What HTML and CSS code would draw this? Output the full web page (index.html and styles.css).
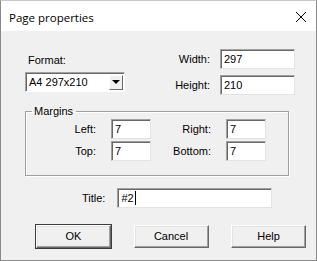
FILE: index.html
```html
<!DOCTYPE html>
<html>

<head>
  <meta charset="utf-8" />
  <title>Page properties</title>
  <link rel="stylesheet" href="styles.css">
</head>

<body>
  <div class="window">
    <div class="titlebar">
      <span class="caption">Page properties</span>
      <svg class="close" width="12" height="12" viewBox="0 0 12 12">
        <path d="M1 1 L11 11 M11 1 L1 11" stroke="#000" stroke-width="1" fill="none" />
      </svg>
    </div>

    <div class="content">
      <div class="top">
        <div class="format">
          <div class="label">Format:</div>
          <div class="select">
            <span class="select-text">A4 297x210</span>
            <span class="arrow"><span class="tri"></span></span>
          </div>
        </div>

        <div class="size">
          <div class="row">
            <span class="label">Width:</span>
            <div class="field wide">297</div>
          </div>
          <div class="row">
            <span class="label">Height:</span>
            <div class="field wide">210</div>
          </div>
        </div>
      </div>

      <fieldset class="margins">
        <legend>Margins</legend>
        <div class="grid">
          <span class="label">Left:</span>
          <div class="field small">7</div>
          <span class="label">Right:</span>
          <div class="field small">7</div>
          <span class="label">Top:</span>
          <div class="field small">7</div>
          <span class="label">Bottom:</span>
          <div class="field small">7</div>
        </div>
      </fieldset>

      <div class="title-row">
        <span class="label">Title:</span>
        <div class="field long">#2<span class="caret"></span></div>
      </div>

      <div class="buttons">
        <div class="btn default">OK</div>
        <div class="btn">Cancel</div>
        <div class="btn">Help</div>
      </div>
    </div>
  </div>
</body>

</html>
```

FILE: styles.css
```css
html,
body {
  margin: 0;
  background-color: #f0f0f0;
}

body {
  font-family: "Liberation Sans", Arial, sans-serif;
  font-size: 11px;
  line-height: 13px;
  color: #000;
}

.window {
  width: 317px;
  height: 261px;
  box-sizing: border-box;
  border: 1px solid #8a8a8a;
  border-top-color: #c8c8c8;
  background-color: #f0f0f0;
}

.titlebar {
  height: 30px;
  background-color: #fff;
  display: flex;
  align-items: center;
  justify-content: space-between;
  padding: 0 9px 0 8px;
}

.caption {
  font-family: "Open Sans", "Noto Sans", sans-serif;
  font-size: 11.5px;
  margin-top: 2px;
}

.close {
  margin-top: 1px;
}

.content {
  display: flex;
  flex-direction: column;
}

/* top: format + size */
.top {
  display: flex;
  justify-content: space-between;
  padding: 18px 21px 0 24px;
}

.format {
  padding-top: 5px;
}

.format .label {
  padding-left: 3px;
  margin-bottom: 5px;
}

.select {
  width: 100px;
  height: 20px;
  box-sizing: border-box;
  display: flex;
  align-items: center;
  justify-content: space-between;
  background-color: #fff;
  border: 1px solid;
  border-color: #a0a0a0 #fff #fff #a0a0a0;
  box-shadow: inset 1px 1px 0 #696969;
  padding: 0 1px 0 3px;
}

.arrow {
  width: 14px;
  height: 15px;
  box-sizing: border-box;
  background-color: #f0f0f0;
  border: 1px solid;
  border-color: #fff #696969 #696969 #fff;
  display: flex;
  align-items: center;
  justify-content: center;
}

.tri {
  width: 0;
  height: 0;
  border-left: 4px solid transparent;
  border-right: 4px solid transparent;
  border-top: 4px solid #000;
}

.size {
  display: flex;
  flex-direction: column;
  gap: 6px;
}

.row {
  display: flex;
  align-items: center;
  justify-content: flex-end;
  gap: 10px;
}

.field {
  height: 20px;
  box-sizing: border-box;
  background-color: #fff;
  border: 1px solid;
  border-color: #a0a0a0 #e3e3e3 #e3e3e3 #a0a0a0;
  box-shadow: inset 1px 1px 0 #696969;
  padding: 0 2px 0 3px;
  display: flex;
  align-items: center;
}

.wide {
  width: 75px;
}

.small {
  width: 40px;
}

.long {
  width: 155px;
}

.caret {
  width: 1px;
  height: 14px;
  background-color: #000;
  margin-left: 1px;
}

/* margins group */
.margins {
  margin: 10px 0 0 24px;
  width: 264px;
  box-sizing: border-box;
  padding: 1px 0 14px 0;
  border: 1px solid #a0a0a0;
  box-shadow: 1px 1px 0 #fff, inset 1px 1px 0 #fff;
}

.margins legend {
  margin-left: 6px;
  padding: 0 3px 0 2px;
}

.grid {
  display: grid;
  grid-template-columns: 85px 40px 75px 40px;
  row-gap: 2px;
  align-items: center;
}

.grid .label {
  text-align: right;
  padding-right: 15px;
}

/* title */
.title-row {
  display: flex;
  align-items: center;
  margin: 12px 0 0 81px;
  gap: 12px;
}

/* buttons */
.buttons {
  display: flex;
  justify-content: space-between;
  padding: 0 10px 0 35px;
  margin-top: 17px;
}

.btn {
  width: 75px;
  height: 23px;
  box-sizing: border-box;
  display: flex;
  align-items: center;
  justify-content: center;
  background-color: #f0f0f0;
  border: 1px solid;
  border-color: #fff #696969 #696969 #fff;
  box-shadow: inset -1px -1px 0 #a0a0a0, inset 1px 1px 0 #e3e3e3;
}

.default {
  outline: 1px solid #3c3c3c;
  outline-offset: 0;
}
```
